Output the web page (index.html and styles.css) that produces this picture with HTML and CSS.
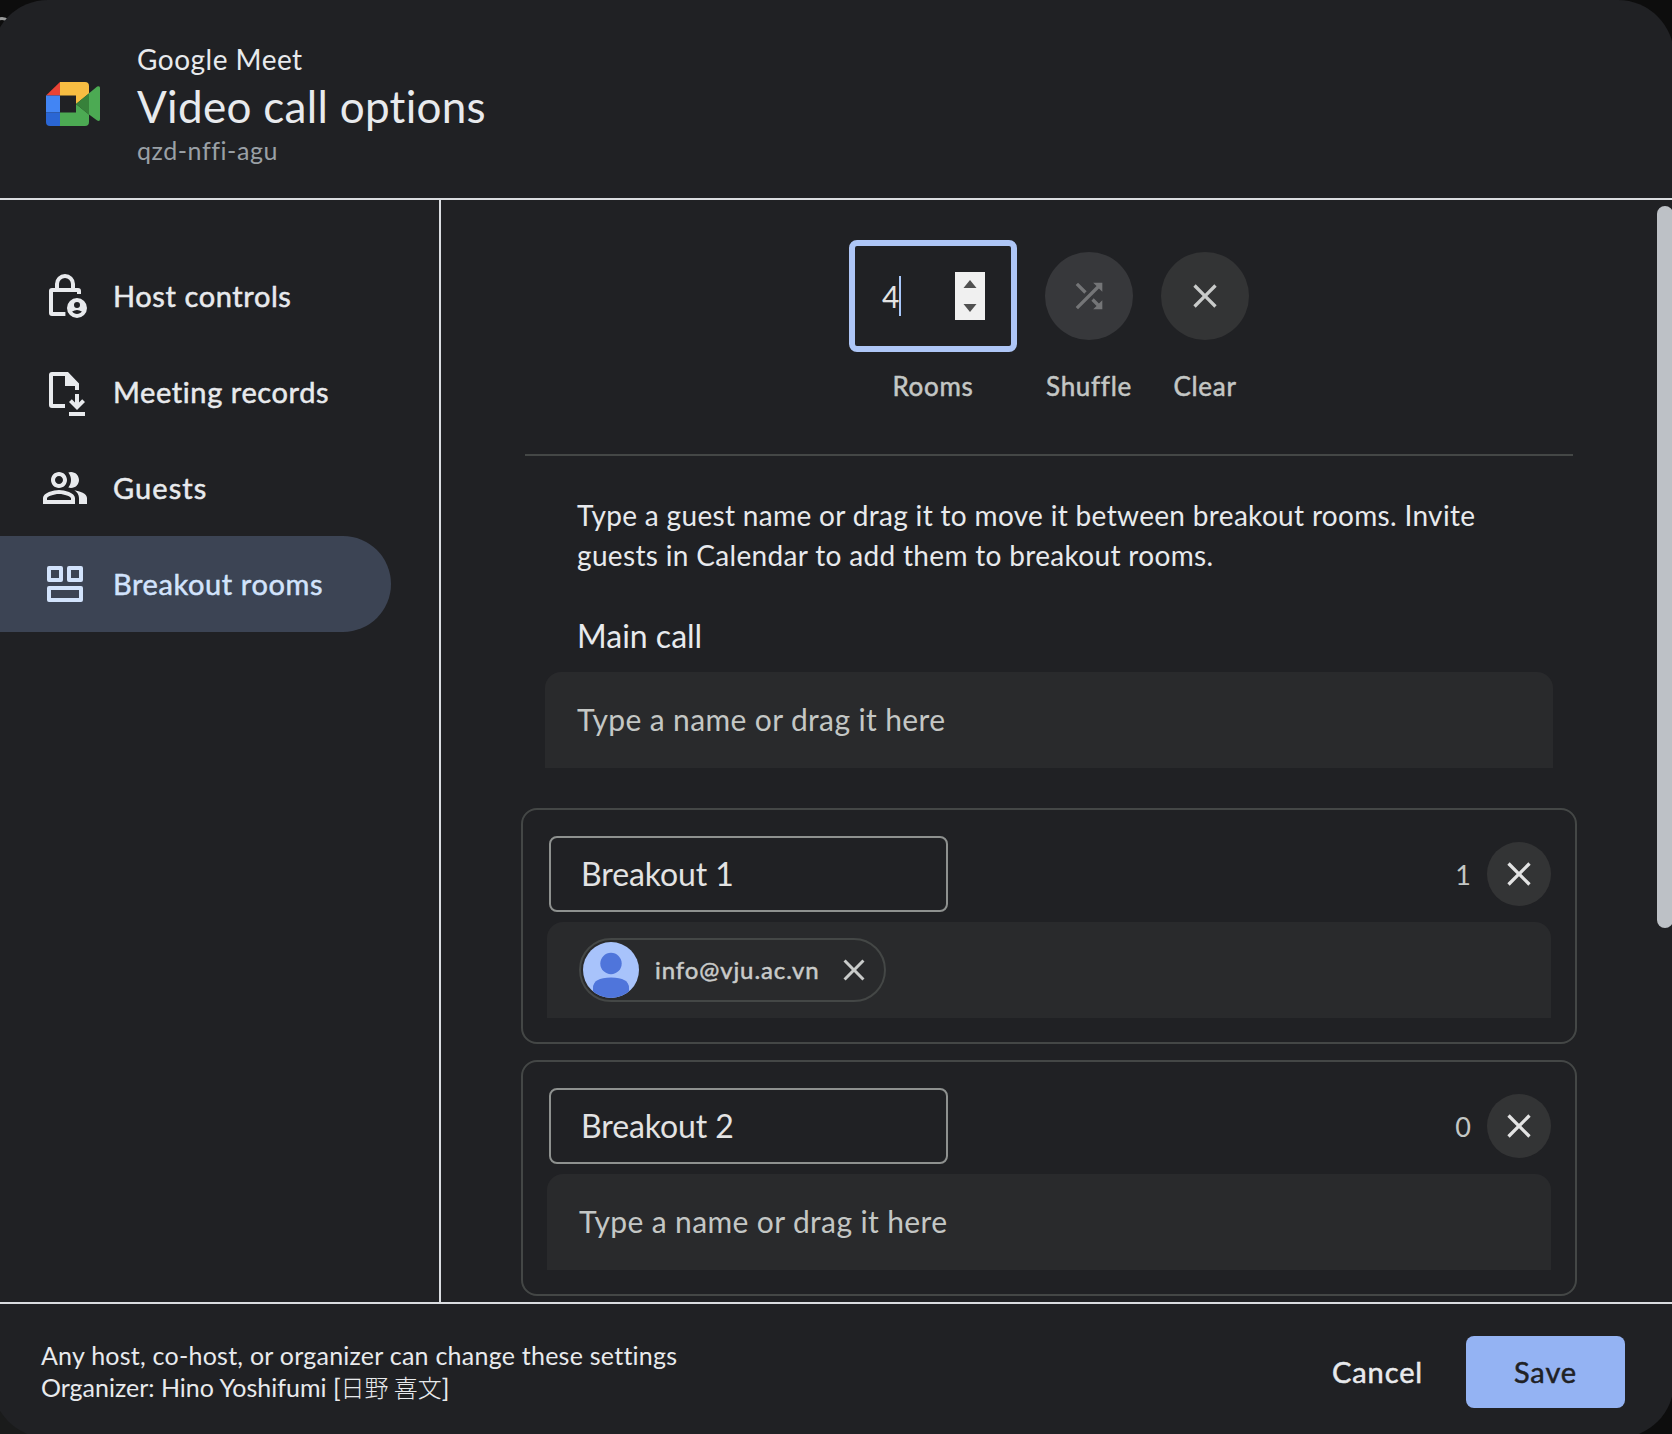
FILE: index.html
```
<!DOCTYPE html>
<html lang="en">
<head>
<meta charset="utf-8">
<title>Video call options</title>
<link rel="stylesheet" href="styles.css">
</head>
<body>
<div class="backdrop-ring"></div>
<div class="dialog">
  <header class="header">
    <svg class="logo" width="54" height="44" viewBox="0 0 54 44">
      <path fill="#ea4335" d="M14 0v13.400H0z"/>
      <path fill="#4285f4" d="M0 13.400h14v17H0z"/>
      <path fill="#2a66d4" d="M0 30.400h14V44H4a4 4 0 0 1-4-4z"/>
      <path fill="#f7bd42" d="M14 0h25a4 4 0 0 1 4 4v7.500L30 22v-8.600H14z"/>
      <path fill="#4caa53" d="M14 44h25a4 4 0 0 0 4-4v-7.500L30 22v8.600H14z"/>
      <path fill="#4caa53" d="M43 11.200 51.200 4.600Q54 3.200 54 6v31q0 3-2.800 1.600L43 32.500z"/>
      <path fill="#37813a" d="M30 22 43 11.200v21.500z"/>
    </svg>
    <div class="titles">
      <div class="product">Google Meet</div>
      <h1 class="title">Video call options</h1>
      <div class="code">qzd-nffi-agu</div>
    </div>
  </header>

  <div class="main">
    <nav class="nav">
      <a class="nav-item">
        <svg width="48" height="48" viewBox="0 0 24 24">
          <path fill="none" stroke="currentColor" stroke-width="2" d="M8 9V6a4 4 0 0 1 8 0v3M19 11V9.500Q19 9 18.500 9H5.500Q5 9 5 9.500V20.500Q5 21 5.500 21H12.200"/>
          <path fill="currentColor" fill-rule="evenodd" d="M18 13a5 5 0 1 0 0 10 5 5 0 0 0 0-10zm0 2a1.500 1.500 0 1 1 0 3 1.500 1.500 0 0 1 0-3zm0 6c-1 0-1.900-.5-2.450-1.250Q16.800 19 18 19t2.450.75C19.900 20.500 19 21 18 21z"/>
        </svg>
        <span class="nav-text">Host controls</span>
      </a>
      <a class="nav-item">
        <svg width="48" height="48" viewBox="0 0 24 24" fill="currentColor">
          <path d="M5.500 2h8L19 7.700V11h-2V9h-5V4H6v14h6v2H5.500Q4 20 4 18.500v-15Q4 2 5.500 2z"/>
          <path d="M17 13h2v4.200l1.600-1.600L22 17l-4 4-4-4 1.400-1.400L17 17.200zM14 22h8v2h-8z"/>
        </svg>
        <span class="nav-text">Meeting records</span>
      </a>
      <a class="nav-item">
        <svg width="48" height="48" viewBox="0 0 24 24" fill="currentColor">
          <path d="M9 12c2.210 0 4-1.790 4-4s-1.790-4-4-4-4 1.790-4 4 1.790 4 4 4zm0-6c1.100 0 2 .9 2 2s-.9 2-2 2-2-.9-2-2 .9-2 2-2zM15 12c2.210 0 4-1.790 4-4s-1.790-4-4-4c-.47 0-.91.1-1.330.24C14.500 5.270 15 6.580 15 8s-.5 2.730-1.330 3.760c.42.14.86.24 1.330.24zM9 13c-2.670 0-8 1.340-8 4v3h16v-3c0-2.660-5.330-4-8-4zm6 5H3v-.99C3.200 16.290 6.300 15 9 15s5.800 1.290 6 2v1zM16.670 13.130C18.040 14.060 19 15.320 19 17v3h4v-3c0-2.180-3.570-3.470-6.330-3.870z"/>
        </svg>
        <span class="nav-text guests">Guests</span>
      </a>
      <a class="nav-item active">
        <svg width="48" height="48" viewBox="0 0 24 24" fill="none" stroke="currentColor" stroke-width="2" stroke-linejoin="round">
          <path d="M4 4h6v6H4zM14 4h6v6h-6zM4 14h16v6H4z"/>
        </svg>
        <span class="nav-text">Breakout rooms</span>
      </a>
    </nav>

    <section class="content">
      <div class="controls">
        <div class="control rooms">
          <div class="number-box">
            <span class="number">4</span><span class="caret"></span>
            <svg class="spinner" width="30" height="48" viewBox="0 0 30 48"><path fill="#f0f0f0" d="M0 0h30v48H0z"/><path fill="#505050" d="M8.500 16 15 8l6.500 8zM8.500 32 15 40l6.500-8z"/></svg>
          </div>
          <div class="control-label">Rooms</div>
        </div>
        <div class="control">
          <div class="round disabled">
            <svg width="40" height="40" viewBox="0 0 24 24" fill="currentColor"><path d="M10.590 9.170 5.410 4 4 5.410l5.170 5.170 1.420-1.410zM14.500 4l2.040 2.040L4 18.590 5.410 20 17.960 7.460 20 9.500V4h-5.500zm.33 9.410-1.410 1.410 3.130 3.130L14.500 20H20v-5.500l-2.040 2.040-3.130-3.130z"/></svg>
          </div>
          <div class="control-label">Shuffle</div>
        </div>
        <div class="control">
          <div class="round">
            <svg width="40" height="40" viewBox="0 0 24 24" fill="currentColor"><path d="M19 6.410 17.590 5 12 10.590 6.410 5 5 6.410 10.590 12 5 17.590 6.410 19 12 13.410 17.590 19 19 17.590 13.410 12z"/></svg>
          </div>
          <div class="control-label">Clear</div>
        </div>
      </div>

      <div class="intro">Type a guest name or drag it to move it between breakout rooms. Invite<br>guests in Calendar to add them to breakout rooms.</div>
      <h2 class="section-title">Main call</h2>
      <div class="drop main-drop"><span class="placeholder">Type a name or drag it here</span></div>

      <div class="card">
        <div class="card-head">
          <div class="name">Breakout 1</div>
          <span class="count">1</span>
          <div class="round small">
            <svg width="40" height="40" viewBox="0 0 24 24" fill="currentColor"><path d="M19 6.410 17.590 5 12 10.590 6.410 5 5 6.410 10.590 12 5 17.590 6.410 19 12 13.410 17.590 19 19 17.590 13.410 12z"/></svg>
          </div>
        </div>
        <div class="drop">
          <div class="chip">
            <svg class="avatar" width="56" height="56" viewBox="0 0 56 56">
              <clipPath id="face"><circle cx="28" cy="28" r="28"/></clipPath>
              <g clip-path="url(#face)"><path fill="#a8c3fb" d="M0 0h56v56H0z"/><circle cx="28" cy="21.500" r="10.700" fill="#4f75db"/><path fill="#4f75db" d="M10 56V46q0-10.500 18-10.500T46 46v10z"/></g>
            </svg>
            <span class="chip-text">info@vju.ac.vn</span>
            <svg width="36" height="36" viewBox="0 0 24 24" fill="currentColor"><path d="M19 6.410 17.590 5 12 10.590 6.410 5 5 6.410 10.590 12 5 17.590 6.410 19 12 13.410 17.590 19 19 17.590 13.410 12z"/></svg>
          </div>
        </div>
      </div>

      <div class="card">
        <div class="card-head">
          <div class="name">Breakout 2</div>
          <span class="count">0</span>
          <div class="round small">
            <svg width="40" height="40" viewBox="0 0 24 24" fill="currentColor"><path d="M19 6.410 17.590 5 12 10.590 6.410 5 5 6.410 10.590 12 5 17.590 6.410 19 12 13.410 17.590 19 19 17.590 13.410 12z"/></svg>
          </div>
        </div>
        <div class="drop"><span class="placeholder">Type a name or drag it here</span></div>
      </div>
    </section>
    <div class="scrollbar"></div>
  </div>

  <footer class="footer">
    <div class="note">
      <div>Any host, co-host, or organizer can change these settings</div>
      <div class="organizer">Organizer: Hino Yoshifumi [<span class="kanji" lang="ja">日野 喜文</span>]</div>
    </div>
    <div class="cancel">Cancel</div>
    <div class="save">Save</div>
  </footer>
</div>
</body>
</html>
```
FILE: styles.css
```
* { box-sizing: border-box; }

body {
  margin: 0;
  width: 1672px;
  height: 1434px;
  overflow: hidden;
  background: linear-gradient(90deg, #1a1b1b 50%, #0d0d0d 50%) 0 100% / 100% 700px no-repeat #0d0d0d;
  color: #e8eaed;
  font-family: Lato, "Noto Sans CJK JP", sans-serif;
  font-size: 28px;
}

svg { display: block; flex: none; }
h1, h2 { margin: 0; font-weight: 400; }

/* Part of the page behind the dialog that shows past its rounded corner. */
.backdrop-ring {
  position: absolute;
  left: -8px;
  top: 17px;
  width: 20px;
  height: 20px;
  border: 3px solid #9a9b9b;
  border-radius: 50%;
}

.dialog {
  position: relative;
  display: flex;
  flex-direction: column;
  width: 1682px;
  height: 1438px;
  margin-left: -8px;
  border-radius: 56px;
  overflow: hidden;
  background: #202124;
}

.header {
  display: flex;
  height: 200px;
  padding: 39px 0 0 54px;
  border-bottom: 2px solid #dadce0;
}
.logo { margin: 43px 37px 0 0; }
.product { line-height: 40px; letter-spacing: 0.5px; }
.title { font-size: 44px; line-height: 55px; letter-spacing: 0.3px; }
.code { font-size: 25px; line-height: 33px; letter-spacing: 0.55px; color: #9aa0a6; }

.main { display: flex; height: 1102px; }

.nav {
  width: 449px;
  padding-top: 48px;
  border-right: 2px solid #dadce0;
}
.nav-item {
  display: flex;
  align-items: center;
  gap: 24px;
  width: 399px;
  height: 96px;
  padding-left: 49px;
  font-size: 29px;
  letter-spacing: 0.6px;
}
/* A thin outline gives the medium weight that the face itself lacks. */
.nav-item, .control-label, .chip-text, .cancel, .save { -webkit-text-stroke: 0.5px currentColor; }
.nav-text { padding-bottom: 2px; }
.guests { letter-spacing: 1.1px; }
.nav-item.active {
  background: #3c4454;
  border-radius: 0 48px 48px 0;
  color: #d2e3fc;
}

.content {
  width: 1216px;
  padding: 40px 80px 0;
  overflow: hidden;
}
.controls {
  display: flex;
  justify-content: center;
  gap: 28px;
  height: 216px;
  margin: 0 4px;
  border-bottom: 2px solid #444746;
}
.control { width: 88px; padding-top: 12px; }
.rooms { width: 168px; padding-top: 0; }
.number-box {
  display: flex;
  align-items: center;
  height: 112px;
  padding: 0 26px 0 27px;
  border: 6px solid #aec6f6;
  border-radius: 8px;
  color: #e3e3e3;
}
.number { width: 17px; padding-bottom: 1px; font-size: 30px; }
.caret { width: 2px; height: 40px; background: #a8c7fa; }
.spinner { margin-left: auto; }
.round {
  display: flex;
  align-items: center;
  justify-content: center;
  width: 88px;
  height: 88px;
  border-radius: 50%;
  background: #333435;
  color: #c9cbca;
}
.round.disabled { background: #37383b; color: #747577; }
.round.small { width: 64px; height: 64px; color: #e3e3e3; }
.control-label {
  display: flex;
  justify-content: center;
  padding-top: 30px;
  font-size: 26px;
  line-height: 32px;
  letter-spacing: 0.7px;
  color: #c4c7c5;
}
.rooms .control-label { padding-top: 18px; }

.intro { margin: 39px 56px 0; line-height: 40px; letter-spacing: 0.33px; white-space: nowrap; }
.section-title { margin: 41px 56px 0; font-size: 32px; line-height: 40px; }

.drop {
  display: flex;
  align-items: center;
  height: 96px;
  padding-left: 32px;
  border-radius: 16px 16px 0 0;
  background: #292a2c;
}
.main-drop { margin: 16px 24px 40px; }
.placeholder { padding-bottom: 2px; font-size: 30px; letter-spacing: 0.37px; color: #c4c7c5; }

.card {
  height: 236px;
  margin-bottom: 16px;
  padding: 26px 24px 0;
  border: 2px solid #444746;
  border-radius: 16px;
}
.card-head {
  display: flex;
  align-items: center;
  height: 76px;
  margin: 0 0 10px 2px;
}
.name {
  width: 399px;
  height: 76px;
  padding-left: 30px;
  border: 2px solid #8e918f;
  border-radius: 8px;
  font-size: 32px;
  line-height: 72px;
  letter-spacing: -0.1px;
  color: #e3e3e3;
}
.count { margin: 0 16px 0 auto; font-size: 27px; color: #c4c7c5; }

.chip {
  display: flex;
  align-items: center;
  width: 307px;
  height: 64px;
  padding-left: 2px;
  border: 2px solid #444746;
  border-radius: 32px;
  color: #c9cbca;
  font-size: 24px;
}
.chip-text {
  width: 181px;
  margin-left: 16px;
  padding-bottom: 2px;
  letter-spacing: 0.9px;
}

.scrollbar {
  width: 16px;
  height: 722px;
  margin-top: 6px;
  border-radius: 8px;
  background: #bdc1c6;
}

.footer {
  display: flex;
  height: 136px;
  padding: 0 49px 0 49px;
  border-top: 2px solid #dadce0;
}
.note {
  padding-top: 35px;
  font-size: 25px;
  line-height: 32px;
  letter-spacing: 0.24px;
  white-space: nowrap;
}
.organizer { letter-spacing: 0; }
.kanji { font-family: "Noto Sans CJK JP", sans-serif; font-size: 24px; font-weight: 300; line-height: 1; }
.cancel, .save {
  height: 72px;
  margin-top: 32px;
  font-size: 29px;
  line-height: 71px;
  letter-spacing: 0.9px;
}
.cancel { width: 91px; margin-left: auto; margin-right: 43px; }
.save {
  width: 159px;
  border-radius: 8px;
  background: #94b3f3;
  color: #202124;
  text-align: center;
}
```
